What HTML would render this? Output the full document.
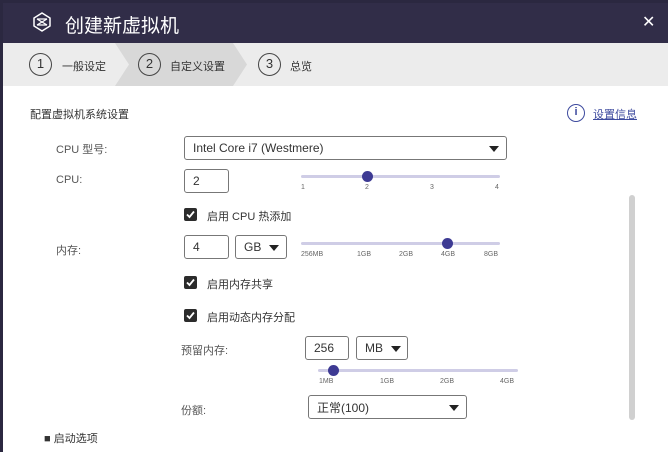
<!DOCTYPE html>
<html><head><meta charset="utf-8"><style>
*{margin:0;padding:0;box-sizing:border-box}
body{width:668px;height:449px;overflow:hidden;background:#2b2840;font-family:"Liberation Sans","Noto Sans CJK SC",sans-serif;position:relative}
.dlg{position:absolute;left:3px;top:3px;width:668px;height:449px;background:#fff}
.hdr{position:absolute;left:0;top:0;width:665px;height:40px;background:#312d48}
.a{position:absolute;white-space:nowrap}
.t{font-size:11px;color:#555}
.box{position:absolute;border:1px solid #777;border-radius:3px;background:#fff;font-size:12px;color:#333;padding-left:8px;display:flex;align-items:center}
.tri{position:absolute;width:0;height:0;border-left:5px solid transparent;border-right:5px solid transparent;border-top:6px solid #222}
.cb{position:absolute;width:13px;height:13px;background:#2b2b2b;border-radius:2px}
.cb svg{position:absolute;left:2px;top:2px}
.sl{position:absolute;height:3px;background:#cfcde6;border-radius:2px}
.th{position:absolute;width:11px;height:11px;border-radius:50%;background:#3d3a93}
.lb{position:absolute;font-size:7px;color:#666}
.circ{position:absolute;width:23px;height:23px;border:1.5px solid #444;border-radius:50%;font-size:13px;color:#333;text-align:center;line-height:20px}
</style></head><body>
<div class="dlg">
<div class="hdr"></div>
<svg class="a" style="left:29px;top:9px" width="20" height="20" viewBox="0 0 20 20"><path d="M10 1 L18 6 V14 L10 19 L2 14 V6 Z" fill="none" stroke="#fff" stroke-width="1.5"/><path d="M5 7 L15 13 M15 7 L5 13 M5 7 H15 M5 13 H15" stroke="#fff" stroke-width="1.3" fill="none"/></svg>
<div class="a" style="left:62px;top:8px;font-size:19px;color:#fff">创建新虚拟机</div>
<div class="a" style="left:639px;top:9px;font-size:16px;color:#fff">✕</div>
<div class="a" style="left:0;top:40px;width:665px;height:43px;background:#ececec"></div>
<svg class="a" style="left:112px;top:40px" width="140" height="43"><polygon points="0,0 118,0 132,21.5 118,43 0,43 14,21.5" fill="#d8d8d8"/></svg>
<div class="circ" style="left:26px;top:50px">1</div><div class="a" style="left:59px;top:55px;font-size:11px;color:#333">一般设定</div>
<div class="circ" style="left:135px;top:50px">2</div><div class="a" style="left:167px;top:55px;font-size:11px;color:#333">自定义设置</div>
<div class="circ" style="left:255px;top:50px">3</div><div class="a" style="left:287px;top:55px;font-size:11px;color:#333">总览</div>
<div class="a" style="left:27px;top:103px;font-size:11px;color:#333">配置虚拟机系统设置</div>
<div class="a" style="left:564px;top:101px;width:18px;height:18px;border:1.5px solid #3d4a9e;border-radius:50%;color:#3d4a9e;font-size:11px;font-weight:bold;text-align:center;line-height:15px">i</div>
<div class="a" style="left:590px;top:103px;font-size:11px;color:#3d4a9e;text-decoration:underline">设置信息</div>
<div class="a t" style="left:53px;top:138px">CPU 型号:</div>
<div class="box" style="left:181px;top:133px;width:323px;height:24px">Intel Core i7 (Westmere)<div class="tri" style="left:304px;top:9px"></div></div>
<div class="a t" style="left:53px;top:171px">CPU:</div>
<div class="box" style="left:181px;top:166px;width:45px;height:24px">2</div>
<div class="sl" style="left:298px;top:172px;width:199px"></div><div class="th" style="left:359px;top:168px"></div>
<div class="lb" style="left:298px;top:181px">1</div><div class="lb" style="left:362px;top:181px">2</div><div class="lb" style="left:427px;top:181px">3</div><div class="lb" style="left:492px;top:181px">4</div>
<div class="cb" style="left:181px;top:205px"><svg width="9" height="9"><path d="M1 4.5 L3.5 7 L8 1.5" stroke="#fff" stroke-width="1.8" fill="none"/></svg></div>
<div class="a" style="left:204px;top:205px;font-size:11px;color:#333">启用 CPU 热添加</div>
<div class="a t" style="left:53px;top:239px">内存:</div>
<div class="box" style="left:181px;top:232px;width:45px;height:24px">4</div>
<div class="box" style="left:232px;top:232px;width:52px;height:24px">GB<div class="tri" style="left:33px;top:9px"></div></div>
<div class="sl" style="left:298px;top:239px;width:199px"></div><div class="th" style="left:439px;top:235px"></div>
<div class="lb" style="left:298px;top:248px">256MB</div><div class="lb" style="left:354px;top:248px">1GB</div><div class="lb" style="left:396px;top:248px">2GB</div><div class="lb" style="left:438px;top:248px">4GB</div><div class="lb" style="left:481px;top:248px">8GB</div>
<div class="cb" style="left:181px;top:273px"><svg width="9" height="9"><path d="M1 4.5 L3.5 7 L8 1.5" stroke="#fff" stroke-width="1.8" fill="none"/></svg></div>
<div class="a" style="left:204px;top:273px;font-size:11px;color:#333">启用内存共享</div>
<div class="cb" style="left:181px;top:306px"><svg width="9" height="9"><path d="M1 4.5 L3.5 7 L8 1.5" stroke="#fff" stroke-width="1.8" fill="none"/></svg></div>
<div class="a" style="left:204px;top:306px;font-size:11px;color:#333">启用动态内存分配</div>
<div class="a t" style="left:178px;top:339px">预留内存:</div>
<div class="box" style="left:302px;top:333px;width:44px;height:24px">256</div>
<div class="box" style="left:353px;top:333px;width:52px;height:24px">MB<div class="tri" style="left:34px;top:9px"></div></div>
<div class="sl" style="left:315px;top:366px;width:200px"></div><div class="th" style="left:325px;top:362px"></div>
<div class="lb" style="left:316px;top:375px">1MB</div><div class="lb" style="left:377px;top:375px">1GB</div><div class="lb" style="left:437px;top:375px">2GB</div><div class="lb" style="left:497px;top:375px">4GB</div>
<div class="a t" style="left:178px;top:399px">份额:</div>
<div class="box" style="left:305px;top:392px;width:159px;height:24px">正常(100)<div class="tri" style="left:140px;top:9px"></div></div>
<div class="a" style="left:626px;top:192px;width:6px;height:225px;background:#d0d0d0;border-radius:3px"></div>
<div class="a" style="left:41px;top:427px;font-size:11px;color:#333">■ 启动选项</div>
</div>
</body></html>
